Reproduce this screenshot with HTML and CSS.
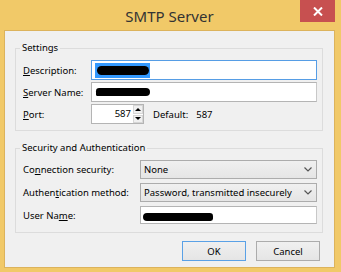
FILE: index.html
```html
<!DOCTYPE html>
<html>
<head>
  <title>SMTP Server</title>
  <link rel="stylesheet" href="styles.css">
</head>
<body>

<div class="window">
  <div class="titlebar">
    <span class="title">SMTP Server</span>
    <div class="close">
      <svg width="10" height="9" viewBox="0 0 10 9"><path d="M1 0.5 L9 8.5 M9 0.5 L1 8.5" stroke="#fff" stroke-width="2"/></svg>
    </div>
  </div>

  <div class="client">
    <fieldset class="group settings">
      <legend>Settings</legend>
      <label><u>D</u>escription:</label>
      <div class="field focused"><span class="sel"><span class="blot b1"></span></span></div>

      <label><u>S</u>erver Name:</label>
      <div class="field"><span class="blot b2"></span></div>

      <label><u>P</u>ort:</label>
      <div class="port-row">
        <div class="spin">
          <span class="spin-text">587</span>
          <span class="spin-btns">
            <span class="arrow up"></span>
            <span class="arrow down"></span>
          </span>
        </div>
        <span class="default-label">Default:</span>
        <span>587</span>
      </div>
    </fieldset>

    <fieldset class="group security">
      <legend>Security and Authentication</legend>
      <label>Co<u>n</u>nection security:</label>
      <div class="select"><span>None</span><svg width="8" height="5" viewBox="0 0 8 5"><path d="M0.5 0.5 L4 4 L7.5 0.5" fill="none" stroke="#555" stroke-width="1.2"/></svg></div>

      <label>Authen<u>t</u>ication method:</label>
      <div class="select"><span>Password, transmitted insecurely</span><svg width="8" height="5" viewBox="0 0 8 5"><path d="M0.5 0.5 L4 4 L7.5 0.5" fill="none" stroke="#555" stroke-width="1.2"/></svg></div>

      <label>User Na<u>m</u>e:</label>
      <div class="field short"><span class="blot b3"></span></div>
    </fieldset>

    <div class="buttons">
      <button class="btn default">OK</button>
      <button class="btn">Cancel</button>
    </div>
  </div>
</div>

</body>
</html>
```

FILE: styles.css
```css
body {
  margin: 0;
  background-color: #f1c968;
  font-family: "Noto Sans", sans-serif;
  font-size: 9.5px;
  color: #000;
}
.window {
  width: 341px;
  height: 272px;
  box-sizing: border-box;
  padding: 0 7px 5px 5px;
  display: flex;
  flex-direction: column;
  position: relative;
}
.titlebar {
  height: 31px;
  display: flex;
  align-items: center;
  justify-content: center;
}
.title {
  font-size: 15px;
  color: #333;
}
.close {
  position: absolute;
  top: 0;
  right: 6px;
  width: 35px;
  height: 22px;
  background-color: #c75050;
  display: flex;
  align-items: center;
  justify-content: center;
}
.client {
  flex: 1;
  background-color: #f0f0f0;
  box-shadow: 0 0 0 1px #dcb35c;
  padding: 0 11px 0 10px;
  display: flex;
  flex-direction: column;
}
.group {
  margin: 9px 0 0 0;
  padding: 4px 5px 6px 7px;
  border: 1px solid #dcdcdc;
  min-width: 0;
  display: grid;
  align-items: center;
}
.group legend {
  padding: 0 2px;
  margin-left: -3px;
  line-height: 16px;
}
.settings {
  grid-template-columns: 68px 1fr;
  row-gap: 2px;
}
.security {
  grid-template-columns: 117px 1fr;
  row-gap: 4px;
  padding-bottom: 8px;
}
.field {
  height: 20px;
  box-sizing: border-box;
  background: #fff;
  border: 1px solid #b4b4b4;
  border-right-color: #c8c8c8;
  display: flex;
  align-items: center;
}
.field.focused {
  border-color: #569de5;
}
.field.short {
  height: 18px;
}
.sel {
  margin-left: 3px;
  width: 55px;
  height: 15px;
  background-color: #3399ff;
  display: flex;
  align-items: center;
}
.blot {
  display: block;
  background: #000;
  border-radius: 5px;
}
.b1 {
  width: 52px;
  height: 9px;
  margin-left: 2px;
}
.b2 {
  width: 54px;
  height: 8px;
  margin-left: 4px;
  border-radius: 4px 5px 5px 2px;
}
.b3 {
  width: 70px;
  height: 8px;
  margin-left: 2px;
  margin-top: 3px;
  border-radius: 5px 4px 3px 5px;
}
.port-row {
  display: flex;
  align-items: center;
}
.spin {
  width: 53px;
  height: 20px;
  box-sizing: border-box;
  background: #fff;
  border: 1px solid #b4b4b4;
  display: flex;
}
.spin-text {
  flex: 1;
  text-align: right;
  line-height: 18px;
  padding-right: 1px;
}
.spin-btns {
  width: 10px;
  display: flex;
  flex-direction: column;
  gap: 1px;
  padding: 0 0 0 1px;
}
.arrow {
  flex: 1;
  background: #f0f0f0;
  border: 1px solid #d6d6d6;
  display: flex;
  align-items: center;
  justify-content: center;
}
.arrow::after {
  content: "";
  border-left: 3px solid transparent;
  border-right: 3px solid transparent;
}
.arrow.up::after {
  border-bottom: 3px solid #000;
}
.arrow.down::after {
  border-top: 3px solid #000;
}
.default-label {
  margin-left: 9px;
  margin-right: 8px;
}
.select {
  height: 19px;
  box-sizing: border-box;
  border: 1px solid #acacac;
  background: linear-gradient(#f0f0f0, #e5e5e5);
  display: flex;
  align-items: center;
  justify-content: space-between;
  padding: 0 4px 0 3px;
}
.buttons {
  display: flex;
  justify-content: flex-end;
  gap: 10px;
  margin-top: 8px;
  padding-right: 3px;
}
.btn {
  width: 64px;
  height: 20px;
  font-family: "Noto Sans", sans-serif;
  font-size: 9.5px;
  color: #000;
  border: 1px solid #acacac;
  background: linear-gradient(#f0f0f0, #e5e5e5);
  padding: 0;
}
.btn.default {
  border-color: #5aa1e6;
}
```
